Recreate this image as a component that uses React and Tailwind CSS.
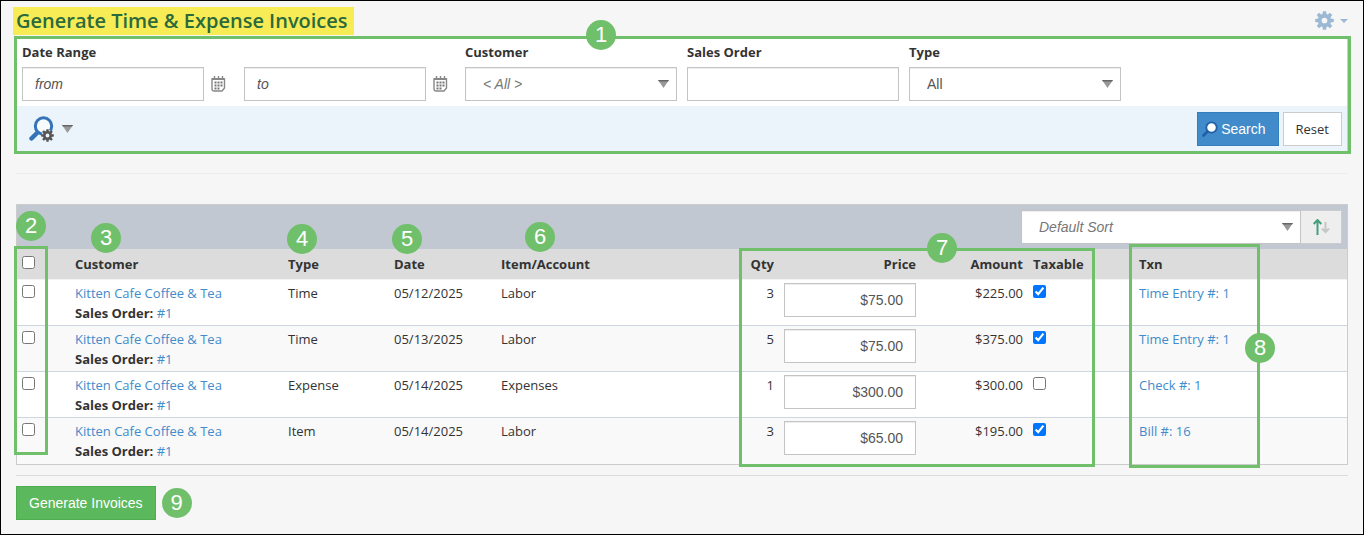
import { useState } from "react";

const initialRows = [
  { id: 1, type: "Time", date: "05/12/2025", item: "Labor", qty: 3, price: "$75.00", amount: "$225.00", taxable: true, txn: "Time Entry #: 1" },
  { id: 2, type: "Time", date: "05/13/2025", item: "Labor", qty: 5, price: "$75.00", amount: "$375.00", taxable: true, txn: "Time Entry #: 1" },
  { id: 3, type: "Expense", date: "05/14/2025", item: "Expenses", qty: 1, price: "$300.00", amount: "$300.00", taxable: false, txn: "Check #: 1" },
  { id: 4, type: "Item", date: "05/14/2025", item: "Labor", qty: 3, price: "$65.00", amount: "$195.00", taxable: true, txn: "Bill #: 16" },
];

const fieldClass =
  "h-[34px] border border-[#c4c4c4] bg-white font-['Liberation_Sans',sans-serif] text-sm text-[#555] shadow-[inset_0_1px_1px_rgba(0,0,0,0.075)] outline-none";

export default function App() {
  return (
    <div className="min-h-screen border border-black bg-[#f6f6f6] px-[13px] pt-[6px] pb-[13px] font-['Open_Sans',sans-serif] text-[13px] leading-5 text-[#333]">
      <header className="flex items-center justify-between">
        <h1 className="-ml-px mb-px h-7 bg-[#f7ec56] pr-1.5 pl-[3px] text-[20px] leading-7 font-semibold text-[#2a6a3c]">
          Generate Time &amp; Expense Invoices
        </h1>

        <button aria-label="Settings" className="mr-0.5 mb-0.5 flex items-center gap-1.5 text-[#9bb9d4]">
          <Gear className="size-[19px]" hole={3} />
          <svg className="h-1 w-2" viewBox="0 0 8 4" fill="currentColor">
            <path d="M0 0h8L4 4z" />
          </svg>
        </button>
      </header>

      <SearchPanel />

      <hr className="mx-0.5 mt-[19px] border-[#ececec]" />

      <InvoiceTable />

      <hr className="mx-0.5 mt-[10px] border-[#dcdcdc]" />

      <div className="mt-[10px] ml-px flex items-center gap-1.5 pl-px">
        <button className="h-[34px] border border-[#4cae4c] bg-[#5cb85c] px-3 font-['Liberation_Sans',sans-serif] text-sm text-white">
          Generate Invoices
        </button>
        <Badge n={9} />
      </div>
    </div>
  );
}

function SearchPanel() {
  const [type, setType] = useState("All");

  return (
    <form
      onSubmit={(e) => e.preventDefault()}
      className="relative -mr-px border-3 border-[#70bf6a]"
    >
      <Badge n={1} className="absolute -top-[19px] left-[569px]" />

      <div className="flex flex-wrap gap-x-[10px] border-r border-[#ccc] bg-white px-[5px] pt-[3px] pb-[5px]">
        <fieldset className="mr-[7px]">
          <legend className="mb-[5px] font-bold">Date Range</legend>
          <div className="flex items-center">
            <DateField label="From date" placeholder="from" />
            <DateField label="To date" placeholder="to" className="ml-[18px]" />
          </div>
        </fieldset>

        <Field id="customer" label="Customer">
          <Dropdown id="customer" italic options={["< All >"]} />
        </Field>

        <Field id="order" label="Sales Order">
          <input id="order" className={`${fieldClass} w-full px-3`} />
        </Field>

        <Field id="type" label="Type">
          <Dropdown
            id="type"
            value={type}
            onChange={(e) => setType(e.target.value)}
            options={["All", "Time", "Expense", "Item"]}
          />
        </Field>
      </div>

      <div className="flex h-[45px] items-center justify-between border-r border-[#ccc] bg-[#ebf3fb] pt-px pr-[5px] pl-3">
        <button type="button" aria-label="Advanced search" className="flex items-center gap-2">
          <AdvancedIcon />
          <Arrow />
        </button>

        <div className="flex gap-1">
          <button className="flex h-[34px] items-center gap-[3px] border border-[#357ebd] bg-[#428bca] pr-3 pl-1 font-['Liberation_Sans',sans-serif] text-sm text-white">
            <svg className="size-4" viewBox="0 0 16 16">
              <path d="M1.500 14.500L6 10" stroke="#1f5fa8" strokeWidth="2.600" strokeLinecap="round" />
              <circle cx="9.500" cy="6.500" r="5.200" fill="#fff" stroke="#1f5fa8" strokeWidth="1.800" />
            </svg>
            Search
          </button>
          <button type="reset" className="h-[34px] border border-[#ccc] bg-white px-3">
            Reset
          </button>
        </div>
      </div>
    </form>
  );
}

function Field({ id, label, children }) {
  return (
    <div className="w-[212px]">
      <label htmlFor={id} className="mb-[5px] block font-bold">
        {label}
      </label>
      {children}
    </div>
  );
}

function DateField({ label, placeholder, className = "" }) {
  return (
    <div className={`flex items-center gap-[7px] ${className}`}>
      <input
        aria-label={label}
        placeholder={placeholder}
        className={`${fieldClass} w-[182px] px-3 italic placeholder:text-[#555]`}
      />
      <button type="button" aria-label={`Pick ${label.toLowerCase()}`}>
        <svg className="h-4 w-[15px]" viewBox="0 0 15 16" fill="none">
          <path d="M1 3h12.500v9l-2.500 3H3a2 2 0 0 1-2-2z" fill="#fff" stroke="#888" strokeWidth="1.400" />
          <path d="M1 3h12.500" stroke="#888" strokeWidth="2" />
          <path d="M3.500 0v3M7.500 0v3M11.500 0v3" stroke="#888" strokeWidth="1.400" />
          <path d="M4.500 5.500v8M7.500 5.500v8M10.500 5.500v5" stroke="#777" strokeWidth="2" strokeDasharray="2 1" />
        </svg>
      </button>
    </div>
  );
}

function Dropdown({ id, label, options, italic, ...props }) {
  return (
    <div className="relative">
      <select
        id={id}
        aria-label={label}
        className={`${fieldClass} w-full appearance-none px-[17px] ${italic ? "text-[#777] italic" : ""}`}
        {...props}
      >
        {options.map((option) => (
          <option key={option}>{option}</option>
        ))}
      </select>
      <span className="pointer-events-none absolute inset-y-0 right-2 flex items-center">
        <Arrow />
      </span>
    </div>
  );
}

function InvoiceTable() {
  const [rows, setRows] = useState(initialRows);
  const [selected, setSelected] = useState([]);

  function updateRow(id, changes) {
    setRows((prev) => prev.map((row) => (row.id === id ? { ...row, ...changes } : row)));
  }

  function toggleRow(id) {
    setSelected((prev) => (prev.includes(id) ? prev.filter((x) => x !== id) : [...prev, id]));
  }

  return (
    <section className="relative mx-0.5 mt-[30px] border border-[#ccc] bg-[#f9f9f9] pb-px">
      <div className="flex h-11 items-center justify-end bg-[#c1c8d2] pr-[5px]">
        <div className="w-[280px]">
          <Dropdown label="Sort by" italic options={["Default Sort"]} />
        </div>
        <button
          aria-label="Sort direction"
          className="flex h-[34px] w-[41px] items-center justify-center border border-l-0 border-[#ccc] bg-[#eee]"
        >
          <svg className="h-[17px] w-[17px]" viewBox="0 0 17 17" fill="none">
            <path d="M4.500 16V1M.7 5l3.800-4 3.800 4" stroke="#43a07c" strokeWidth="2" />
            <path d="M12.500 3v10M9 9.500l3.500 3.500 3.500-3.500" stroke="#c6c6c6" strokeWidth="2" />
          </svg>
        </button>
      </div>

      <table className="w-full table-fixed border-collapse">
        <thead>
          <tr className="h-[30px] bg-[#dcdcdc] text-left">
            <th className="w-[53px] px-[5px] align-top">
              <input
                type="checkbox"
                aria-label="Select all"
                className="mt-[7px] block size-[13px]"
                checked={selected.length === rows.length}
                onChange={(e) => setSelected(e.target.checked ? rows.map((row) => row.id) : [])}
              />
            </th>
            <th className="w-[213px] px-[5px]">Customer</th>
            <th className="w-[106px] px-[5px]">Type</th>
            <th className="w-[107px] px-[5px]">Date</th>
            <th className="w-[213px] px-[5px]">Item/Account</th>
            <th className="w-[70px] px-[5px] text-right">Qty</th>
            <th className="w-[142px] px-[5px] text-right">Price</th>
            <th className="w-[107px] px-[5px] text-right">Amount</th>
            <th className="w-[106px] px-[5px]">Taxable</th>
            <th className="w-[213px] px-[5px]">Txn</th>
          </tr>
        </thead>

        <tbody>
          {rows.map((row) => (
            <tr
              key={row.id}
              className="h-[46px] border-t border-[#ced6df] align-top first:border-[#f3f3f3] odd:bg-white even:bg-[#f9f9f9]"
            >
              <td className="px-[5px] pt-[5px]">
                <input
                  type="checkbox"
                  aria-label={`Select row ${row.id}`}
                  className="block size-[13px]"
                  checked={selected.includes(row.id)}
                  onChange={() => toggleRow(row.id)}
                />
              </td>
              <td className="px-[5px] pt-[3px]">
                <a href="#customer" className="block text-[#428bca]">
                  Kitten Cafe Coffee &amp; Tea
                </a>
                <b>Sales Order:</b>{" "}
                <a href="#order" className="text-[#428bca]">
                  #1
                </a>
              </td>
              <td className="px-[5px] pt-[3px]">{row.type}</td>
              <td className="px-[5px] pt-[3px]">{row.date}</td>
              <td className="px-[5px] pt-[3px]">{row.item}</td>
              <td className="px-[5px] pt-[3px] text-right">{row.qty}</td>
              <td className="px-[5px] pt-[3px]">
                <input
                  aria-label={`Price ${row.id}`}
                  value={row.price}
                  onChange={(e) => updateRow(row.id, { price: e.target.value })}
                  className={`${fieldClass} block w-full px-3 text-right`}
                />
              </td>
              <td className="px-[5px] pt-[3px] text-right">{row.amount}</td>
              <td className="px-[5px] pt-[5px]">
                <input
                  type="checkbox"
                  aria-label={`Taxable ${row.id}`}
                  className="block size-[13px]"
                  checked={row.taxable}
                  onChange={(e) => updateRow(row.id, { taxable: e.target.checked })}
                />
              </td>
              <td className="px-[5px] pt-[3px]">
                <a href="#txn" className="text-[#428bca]">
                  {row.txn}
                </a>
              </td>
            </tr>
          ))}
        </tbody>
      </table>

      {/* callouts over the columns */}
      <div className="pointer-events-none absolute top-[41px] bottom-[9px] -left-[3px] w-[34px] border-3 border-[#70bf6a]" />
      <div className="pointer-events-none absolute top-[43px] -bottom-[3px] left-[722px] w-[356px] border-3 border-[#70bf6a]" />
      <div className="pointer-events-none absolute top-[39px] -bottom-[4px] left-[1112px] w-[131px] border-3 border-[#70bf6a]" />
      <Badge n={2} className="absolute top-[6px] -left-px" />
      <Badge n={3} className="absolute top-[18px] left-[74px]" />
      <Badge n={4} className="absolute top-[19px] left-[270px]" />
      <Badge n={5} className="absolute top-[19px] left-[375px]" />
      <Badge n={6} className="absolute top-[17px] left-[508px]" />
      <Badge n={7} className="absolute top-[28px] left-[910px]" />
      <Badge n={8} className="absolute top-[128px] left-[1228px]" />
    </section>
  );
}

function Badge({ n, className = "" }) {
  return (
    <span
      className={`pointer-events-none flex size-[30px] items-center justify-center rounded-full bg-[#70bf6a] font-['Liberation_Sans',sans-serif] text-[22px] leading-none text-white ${className}`}
    >
      {n}
    </span>
  );
}

function Arrow() {
  return (
    <svg className="h-2 w-[11px]" viewBox="0 0 11 8">
      <path d="M0 0h11L5.500 8z" fill="#999" />
      <path d="M0 0h11l-1 1.500H1z" fill="#666" />
    </svg>
  );
}

function Gear({ className, hole }) {
  return (
    <svg className={className} viewBox="-10 -10 20 20">
      <circle r={(hole + 7) / 2} fill="none" stroke="currentColor" strokeWidth={7 - hole} />
      {[0, 45, 90, 135, 180, 225, 270, 315].map((angle) => (
        <path key={angle} d="M-2.200 -6L-1.700 -9.800H1.700L2.200 -6z" fill="currentColor" transform={`rotate(${angle})`} />
      ))}
    </svg>
  );
}

function AdvancedIcon() {
  return (
    <span className="relative block h-[26px] w-[25px]">
      <svg className="h-[26px] w-[25px]" viewBox="0 0 25 26">
        <path d="M2.500 22.500l6-6" stroke="#3573b9" strokeWidth="4.500" strokeLinecap="round" />
        <circle cx="14.500" cy="10" r="8.200" fill="#f8fbfe" stroke="#3573b9" strokeWidth="3" />
        <circle cx="18.500" cy="19.500" r="5.800" fill="#ebf3fb" />
      </svg>
      <span className="absolute right-0 bottom-0 text-[#555]">
        <Gear className="size-[13px]" hole={3} />
      </span>
    </span>
  );
}
